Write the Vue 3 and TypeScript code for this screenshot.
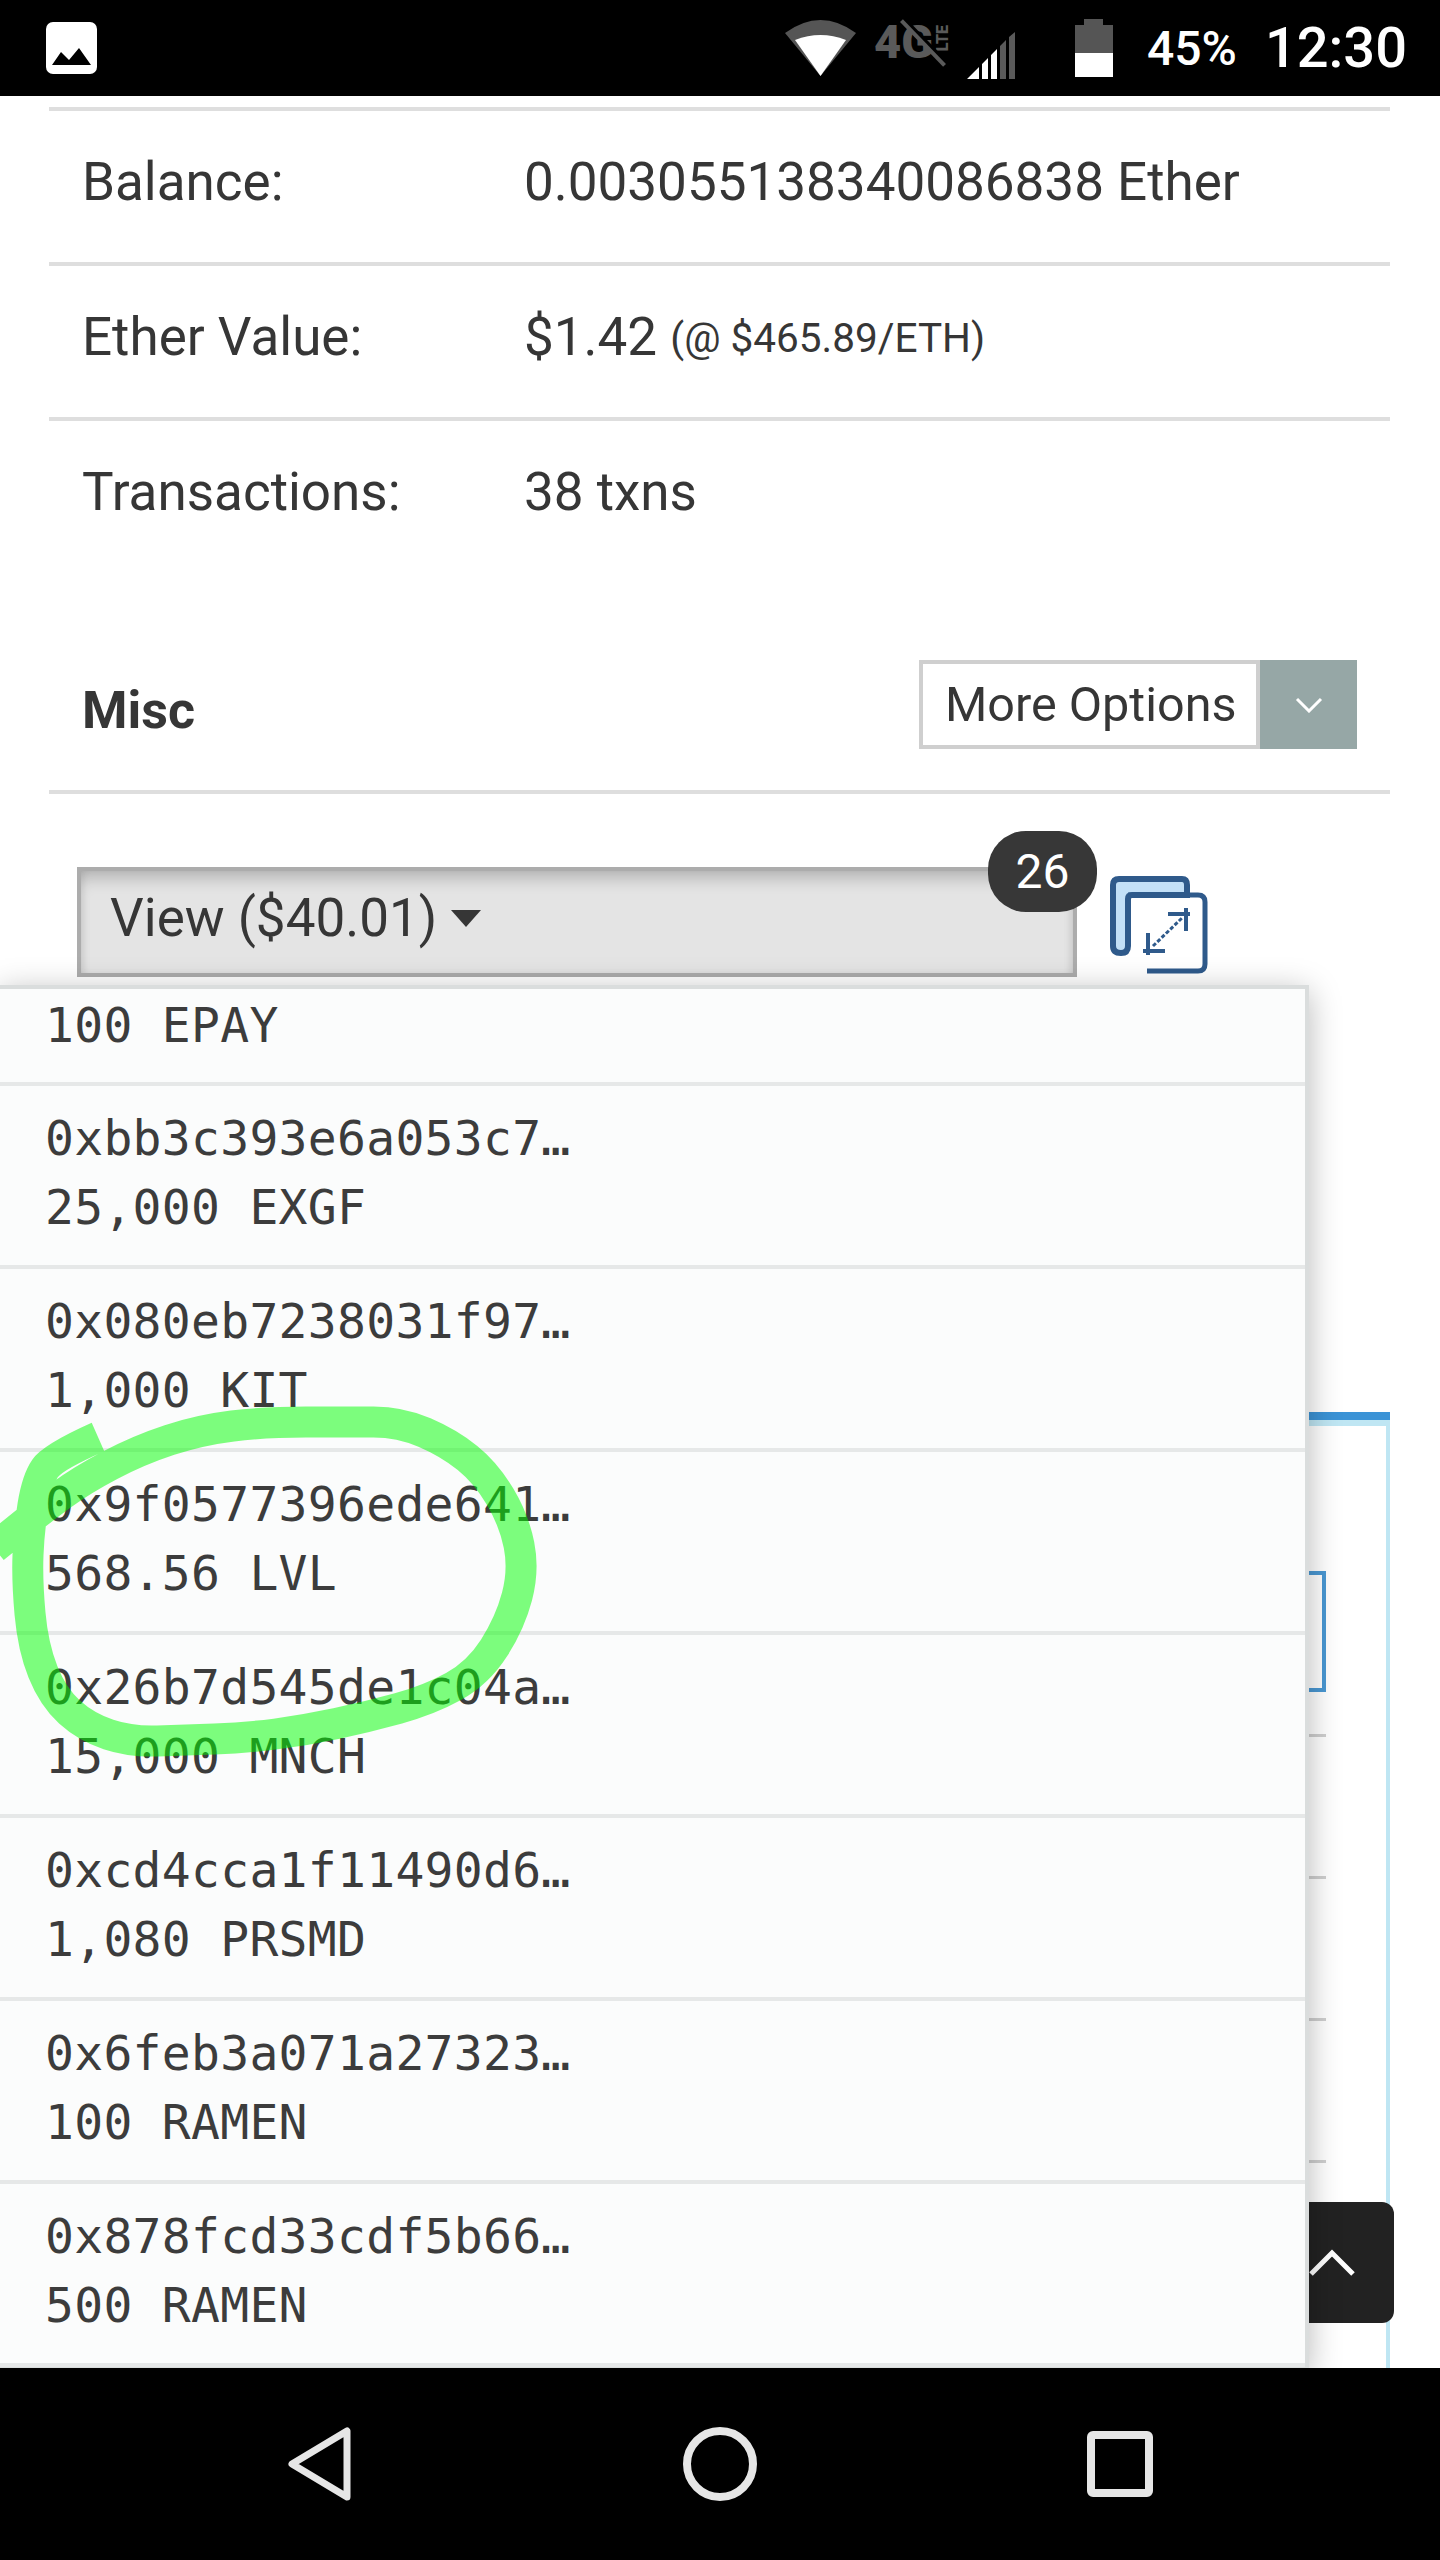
<script setup lang="ts">
interface TokenRow { address?: string; amount: string }

const rows: TokenRow[] = [
  { amount: '100 EPAY' },
  { address: '0xbb3c393e6a053c7…', amount: '25,000 EXGF' },
  { address: '0x080eb7238031f97…', amount: '1,000 KIT' },
  { address: '0x9f0577396ede641…', amount: '568.56 LVL' },
  { address: '0x26b7d545de1c04a…', amount: '15,000 MNCH' },
  { address: '0xcd4cca1f11490d6…', amount: '1,080 PRSMD' },
  { address: '0x6feb3a071a27323…', amount: '100 RAMEN' },
  { address: '0x878fcd33cdf5b66…', amount: '500 RAMEN' },
]

const pts: [number, number][] = [
  [98,1437],[53,1457],[37,1480],[29,1530],[27,1580],[33,1647],[53,1697],[86,1727],[131,1742],
  [184,1740],[245,1738],[306,1730],[367,1717],[429,1700],[478,1673],[510,1623],[524,1570],
  [514,1520],[486,1473],[449,1443],[400,1422],[347,1422],[265,1422],[200,1430],[139,1450],
  [82,1480],[41,1510],[-6,1548],
]

function smooth(p: [number, number][]): string {
  let d = `M${p[0][0]} ${p[0][1]}`
  for (let i = 1; i < p.length - 1; i++) {
    const mx = (p[i][0] + p[i + 1][0]) / 2
    const my = (p[i][1] + p[i + 1][1]) / 2
    d += ` Q${p[i][0]} ${p[i][1]} ${mx} ${my}`
  }
  const last = p[p.length - 1]
  return d + ` L${last[0]} ${last[1]}`
}
const scribble = smooth(pts)
</script>

<template>
  <div class="screen">
    <header class="status">
      <svg class="pic" viewBox="0 0 51 52" width="51" height="52">
        <rect width="51" height="52" rx="7" fill="#fff" />
        <path d="M6 43 L15 30 L23 38 L33 26 L45 43Z" fill="#000" />
      </svg>
      <div class="status-right">
        <svg class="wifi" viewBox="0 0 71 56" width="71" height="56">
          <path d="M0 13 Q35.5 -13 71 13 L35.5 56Z" fill="#555" />
          <path d="M10 20 Q35.5 10 61 20 L35.5 56Z" fill="#fff" />
        </svg>
        <div class="lte">
          <span class="lte-g">4G</span><span class="lte-t">LTE</span>
          <i class="lte-slash"></i>
        </div>
        <svg class="signal" viewBox="0 0 48 47" width="48" height="47">
          <path d="M0 47 L12 35 V47ZM15 32 L21 26 V47H15ZM24 23 L30 17 V47H24Z" fill="#fff" />
          <path d="M33 14 L39 8 V47H33ZM42 5 L48 0 V47H42Z" fill="#5a5a5a" />
        </svg>
        <svg class="batt" viewBox="0 0 38 58" width="38" height="58">
          <path d="M9 0H28V6H38V34H0V6H9Z" fill="#555" />
          <rect y="34" width="38" height="24" fill="#fff" />
        </svg>
        <span class="pct">45%</span>
        <span class="clock">12:30</span>
      </div>
    </header>

    <main class="page">
      <section class="overview">
        <div class="info-row"><span class="label">Balance:</span><span>0.003055138340086838 Ether</span></div>
        <div class="info-row"><span class="label">Ether Value:</span><span>$1.42 <small>(@ $465.89/ETH)</small></span></div>
        <div class="info-row"><span class="label">Transactions:</span><span>38 txns</span></div>
      </section>

      <section class="misc">
        <div class="misc-head">
          <h2>Misc</h2>
          <div class="options">
            <span class="options-text">More Options</span>
            <span class="options-caret">
              <svg viewBox="0 0 28 16" width="28" height="16"><path d="M2 2 L14 14 L26 2" fill="none" stroke="#fff" stroke-width="3" /></svg>
            </span>
          </div>
        </div>
        <div class="view-row">
          <div class="view-btn">
            <span class="view-label">View ($40.01)</span><i class="tri"></i>
            <span class="badge">26</span>
          </div>
          <svg class="expand" viewBox="0 0 98 98" width="98" height="98">
            <path d="M3 9Q3 3 9 3H72Q77 3 77 9V19H22Q18 19 18 23V70Q18 77 11 77Q3 77 3 70Z" fill="#c3e0f7" stroke="#2f5a8b" stroke-width="6" />
            <path d="M18 19H88Q95 19 95 26V88Q95 95 88 95H37" fill="none" stroke="#2f5a8b" stroke-width="5" />
            <path d="M58 38H80M76 32V55M38 57V79M33 75H55" fill="none" stroke="#2f5a8b" stroke-width="4" />
            <path d="M43 70L72 42" fill="none" stroke="#2f5a8b" stroke-width="3" stroke-dasharray="4 2" />
          </svg>
        </div>
      </section>

      <section class="panel">
        <div class="panel-inner">
          <div class="search"></div>
          <div class="tline"></div>
          <div class="tline"></div>
          <div class="tline"></div>
          <div class="tline"></div>
        </div>
      </section>

      <button class="to-top" type="button" aria-label="Back to top">
        <svg viewBox="0 0 48 28" width="48" height="28"><path d="M3 25 L24 4 L45 25" fill="none" stroke="#fff" stroke-width="5" /></svg>
      </button>

      <ul class="menu">
        <li v-for="row in rows" :key="row.amount + row.address" class="menu-row">
          <div v-if="row.address">{{ row.address }}</div>
          <div>{{ row.amount }}</div>
        </li>
      </ul>
    </main>

    <nav class="softkeys">
      <svg viewBox="0 0 66 74" width="66" height="74"><path d="M60 4 L60 70 L5 37Z" fill="none" stroke="#e6e6e6" stroke-width="7" stroke-linejoin="round" /></svg>
      <svg viewBox="0 0 74 74" width="74" height="74"><circle cx="37" cy="37" r="33" fill="none" stroke="#e6e6e6" stroke-width="8" /></svg>
      <svg viewBox="0 0 66 66" width="66" height="66"><rect x="4" y="4" width="58" height="58" rx="2" fill="none" stroke="#e6e6e6" stroke-width="8" /></svg>
    </nav>

    <svg class="scribble" viewBox="0 0 1440 2560" width="1440" height="2560">
      <path :d="scribble" fill="none" stroke="#00ff00" stroke-width="31" />
    </svg>
  </div>
</template>

<style>
html, body { margin: 0; background: #fff; }
</style>

<style scoped>
.screen {
  position: relative;
  width: 1440px;
  height: 2560px;
  display: flex;
  flex-direction: column;
  overflow: hidden;
  font-family: Roboto, "Liberation Sans", sans-serif;
  color: #363636;
}
.status {
  height: 96px;
  flex: none;
  background: #000;
  display: flex;
  align-items: center;
  justify-content: space-between;
  padding: 0 33px 0 46px;
}
.status-right { display: flex; align-items: center; color: #fff; }
.wifi { margin-right: 18px; }
.lte {
  position: relative;
  width: 77px;
  height: 46px;
  display: flex;
  align-items: flex-start;
  margin-right: 16px;
  color: #5a5a5a;
  font-weight: 900;
}
.lte-g { font-size: 47px; line-height: 33px; }
.lte-t {
  font-size: 16px;
  line-height: 15px;
  writing-mode: vertical-rl;
  transform: rotate(180deg);
  margin-left: 2px;
}
.lte-slash {
  position: absolute;
  left: 47px;
  top: -13px;
  width: 4px;
  height: 62px;
  background: #5a5a5a;
  box-shadow: 3px 0 0 #000;
  transform: rotate(-44deg);
}
.signal { margin-top: 14px; margin-right: 60px; }
.batt { margin-right: 34px; }
.pct { font-size: 48px; font-weight: 500; margin-right: 28px; }
.clock { font-size: 56px; font-weight: 500; }

.page {
  position: relative;
  flex: 1;
  min-height: 0;
  overflow: hidden;
  padding: 11px 50px 0 49px;
}
.overview { display: flex; flex-direction: column; }
.info-row {
  display: flex;
  align-items: center;
  height: 141px;
  padding-bottom: 10px;
  border-top: 4px solid #dedede;
  font-size: 53px;
}
.label { width: 475px; padding-left: 33px; box-sizing: border-box; }
small { font-size: 40.5px; vertical-align: 3px; }
.misc-head {
  display: flex;
  align-items: center;
  justify-content: space-between;
  height: 198px;
  margin-top: 24px;
  padding: 23px 33px 0;
  border-bottom: 4px solid #dedede;
  box-sizing: border-box;
}
.misc-head h2 { margin: 11px 0 0; font-size: 52px; font-weight: 700; color: #363636; }
.options {
  display: flex;
  height: 89px;
  font-size: 48.5px;
}
.options-text {
  width: 341px;
  box-sizing: border-box;
  border: 4px solid #cfcfcf;
  display: flex;
  align-items: center;
  padding-left: 22px;
  background: #fff;
}
.options-caret {
  width: 97px;
  background: #96a7a6;
  display: flex;
  align-items: center;
  justify-content: center;
}
.view-row {
  display: flex;
  align-items: flex-start;
  gap: 33px;
  margin-top: 73px;
  margin-left: 28px;
}
.view-btn {
  position: relative;
  width: 1000px;
  height: 110px;
  box-sizing: border-box;
  border: 4px solid #acacac;
  background: #e4e4e4;
  box-shadow: inset 0 14px 16px -6px rgba(0, 0, 0, 0.2), inset 5px 0 8px -4px rgba(0, 0, 0, 0.1), inset -5px 0 8px -4px rgba(0, 0, 0, 0.1);
  font-size: 53px;
  display: flex;
  align-items: center;
  padding: 0 0 8px 29px;
}
.tri {
  margin-left: 14px;
  margin-top: 0;
  width: 0;
  height: 0;
  border-left: 15px solid transparent;
  border-right: 15px solid transparent;
  border-top: 17px solid #363636;
}
.badge {
  position: absolute;
  left: 907px;
  top: -40px;
  width: 109px;
  height: 81px;
  border-radius: 38px;
  background: #373737;
  color: #fff;
  font-size: 48px;
  display: flex;
  align-items: center;
  justify-content: center;
}
.expand { margin-top: 9px; }
.panel {
  margin-top: 435px;
  height: 960px;
  border-top: 8px solid #3b93d6;
}
.panel-inner {
  height: 100%;
  box-sizing: border-box;
  border-top: 6px solid #bfe6f3;
  border-right: 4px solid #bfe6f3;
  padding-right: 60px;
}
.search {
  margin-top: 145px;
  height: 121px;
  box-sizing: border-box;
  border: 4px solid #4a98d3;
  margin-bottom: 42px;
}
.tline { height: 3px; background: #cfcfcf; margin-bottom: 139px; }
.to-top {
  position: absolute;
  right: 46px;
  top: 2106px;
  width: 300px;
  height: 121px;
  padding: 0 0 0 214px;
  border: 0;
  border-radius: 12px;
  background: #222;
  display: flex;
  align-items: center;
}
.menu {
  position: absolute;
  left: 0;
  top: 889px;
  width: 1309px;
  margin: 0;
  padding: 0;
  list-style: none;
  box-sizing: border-box;
  border: 4px solid #dadddd;
  border-left: 0;
  background: #fbfcfc;
  box-shadow: 0 6px 30px rgba(0, 0, 0, 0.28);
  font-family: "DejaVu Sans Mono", "Liberation Mono", monospace;
  font-size: 48px;
  letter-spacing: 0.3px;
  line-height: 69px;
  color: #3c3c3c;
  white-space: pre;
}
.menu-row {
  padding: 18px 0 20px 45px;
  height: 183px;
  box-sizing: border-box;
  border-bottom: 4px solid #e6e8e8;
}
.menu-row:first-child { height: 97px; padding-top: 2px; }
.softkeys {
  position: relative;
  z-index: 3;
  height: 192px;
  flex: none;
  background: #000;
  display: grid;
  grid-template-columns: 66px 74px 66px;
  justify-content: space-between;
  align-items: center;
  padding: 0 287px;
  box-sizing: border-box;
}
.scribble {
  position: absolute;
  inset: 0;
  z-index: 2;
  opacity: 0.5;
  pointer-events: none;
}
</style>
